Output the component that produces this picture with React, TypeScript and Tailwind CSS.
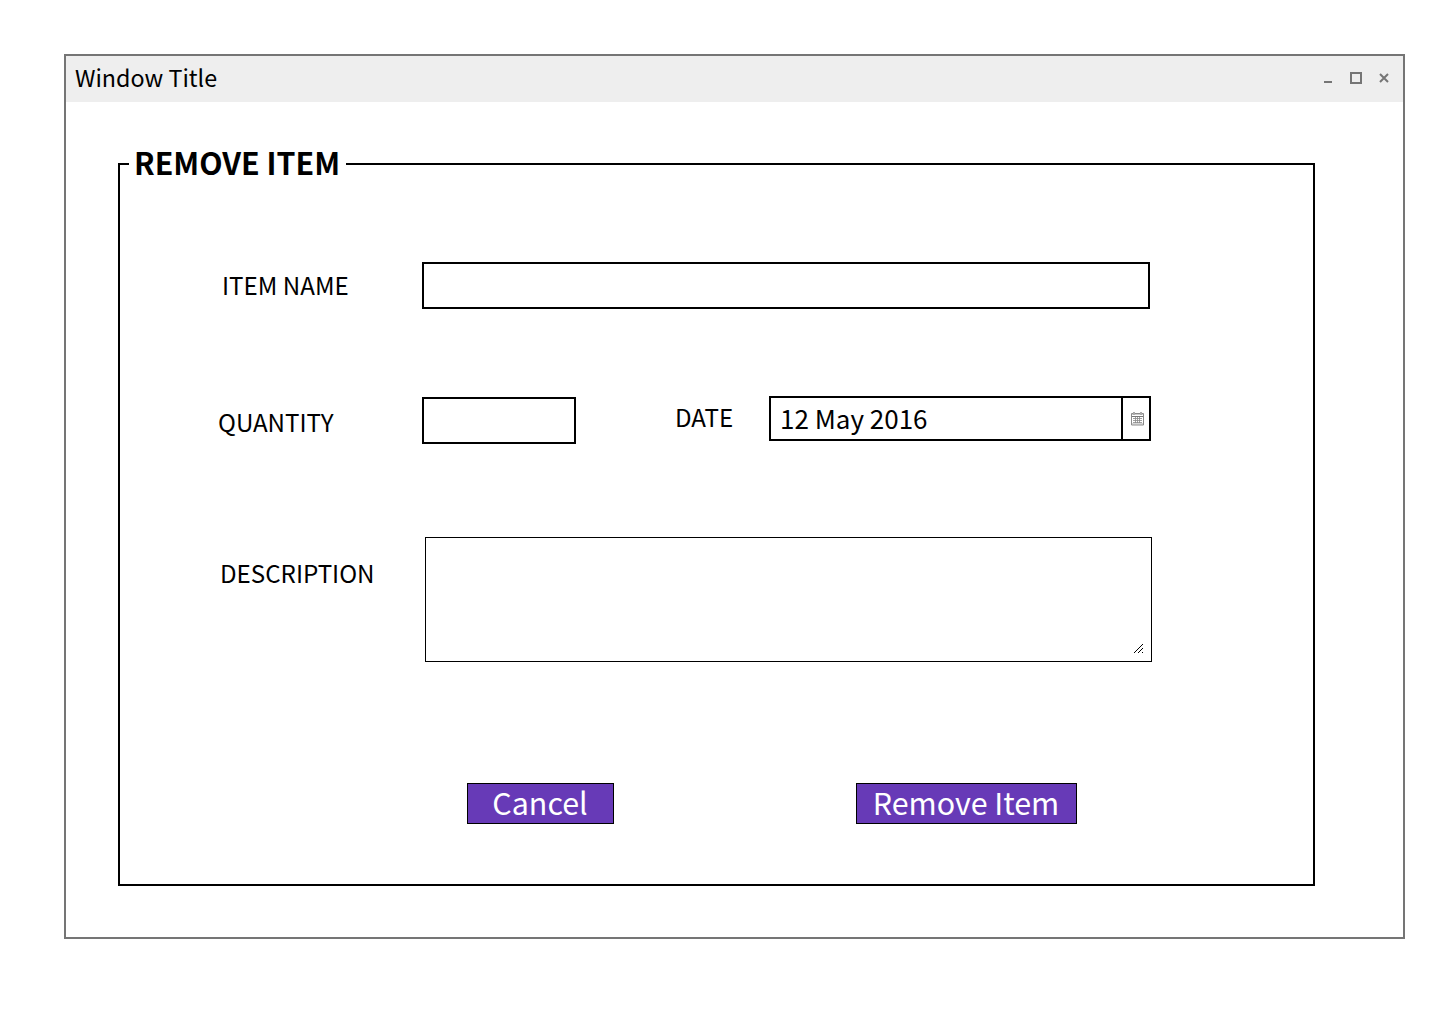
import React from 'react';

const line = 'border-2 border-black bg-white';

function WindowControls() {
  return (
    <svg width="68" height="14" viewBox="0 0 68 14" fill="none" stroke="#757575" strokeWidth="2" className="mb-[2px] mr-[13px]">
      <path d="M2 11h8" />
      <rect x="29" y="2" width="10" height="10" />
      <path d="M58 3l8 8M66 3l-8 8" />
    </svg>
  );
}

function CalendarIcon() {
  return (
    <svg width="13" height="14" viewBox="0 0 13 14" fill="none" className="ml-[2px]">
      <path d="M1 1h11v2H1z" fill="#ccc" />
      <path d="M.5 1.500h12v11.500H.5z" stroke="#8a8a8a" />
      <path d="M1 4.500h11" stroke="#777" />
      <path d="M1 12h11" stroke="#aaa" />
      <path d="M3 0v3M10 0v3" stroke="#aaa" strokeWidth="2" />
      <path d="M2 6.500h9M2 8.500h9M2 10.500h9M4.500 5v6M6.500 5v6M8.500 5v6" stroke="#888" strokeWidth=".8" />
    </svg>
  );
}

const gripDots = [
  [0, 8], [1, 7], [2, 6], [3, 5], [4, 4], [5, 3], [6, 2], [7, 1], [8, 0],
  [4, 8], [5, 7], [6, 6], [7, 5], [8, 4],
  [8, 8],
];

function ResizeGrip() {
  return (
    <svg width="9" height="9" viewBox="0 0 9 9" fill="#000">
      {gripDots.map(([x, y]) => (
        <rect key={`${x}-${y}`} x={x} y={y} width="1" height="1" />
      ))}
    </svg>
  );
}

export default function App() {
  return (
    <div className="h-[1014px] w-[1443px] overflow-hidden bg-white pl-16 pt-[54px] text-black [font-family:'Noto_Sans_CJK_SC',sans-serif]">
      <main className="h-[885px] w-[1341px] border-2 border-[#757575]">
        <header className="flex h-[46px] items-center justify-between bg-[#eee] pl-[9px]">
          <h1 className="h-[46px] text-[23.3px] leading-[42px]">Window Title</h1>
          <WindowControls />
        </header>
        <fieldset className="ml-[52px] mt-[38px] flex h-[746px] w-[1197px] flex-col border-2 border-black pl-[9px]">
          <legend className="h-12 w-[217px] whitespace-nowrap pl-[5px] text-[30.35px] leading-[45px] font-bold">REMOVE ITEM</legend>
          <div className="mt-[74px] flex h-[47px]">
            <label className="w-[293px] pl-[93px] text-[24.15px] leading-[45px]">ITEM NAME</label>
            <div className={`h-[47px] w-[728px] ${line}`} />
          </div>
          <div className="mt-[87px] flex h-[48px]">
            <label className="w-[293px] pl-[89px] pt-[3px] text-[24.15px] leading-[45px]">QUANTITY</label>
            <div className={`mt-px h-[47px] w-[154px] ${line}`} />
            <label className="w-[193px] pl-[99px] text-[24.15px] leading-[41px]">DATE</label>
            <div className={`flex h-[45px] w-[382px] ${line}`}>
              <span className="w-[350px] pl-[9px] text-[26px] leading-[40px]">12 May 2016</span>
              <span className="flex flex-1 items-center justify-center border-l-2 border-black"><CalendarIcon /></span>
            </div>
          </div>
          <div className="mt-[93px] flex h-[125px]">
            <label className="w-[296px] pl-[91px] pt-[13px] text-[24.15px] leading-[45px]">DESCRIPTION</label>
            <div className="flex h-[125px] w-[727px] items-end justify-end border border-black pb-2 pr-2">
              <ResizeGrip />
            </div>
          </div>
          <div className="mt-[121px] flex">
            <button className="ml-[338px] h-[41px] w-[147px] border border-black bg-[#673ab7] pb-[3px] pr-px text-[30.4px] leading-[36px] text-white">Cancel</button>
            <button className="ml-[242px] h-[41px] w-[221px] border border-black bg-[#673ab7] pb-[3px] pr-px text-[30.4px] leading-[36px] text-white">Remove Item</button>
          </div>
        </fieldset>
      </main>
    </div>
  );
}
